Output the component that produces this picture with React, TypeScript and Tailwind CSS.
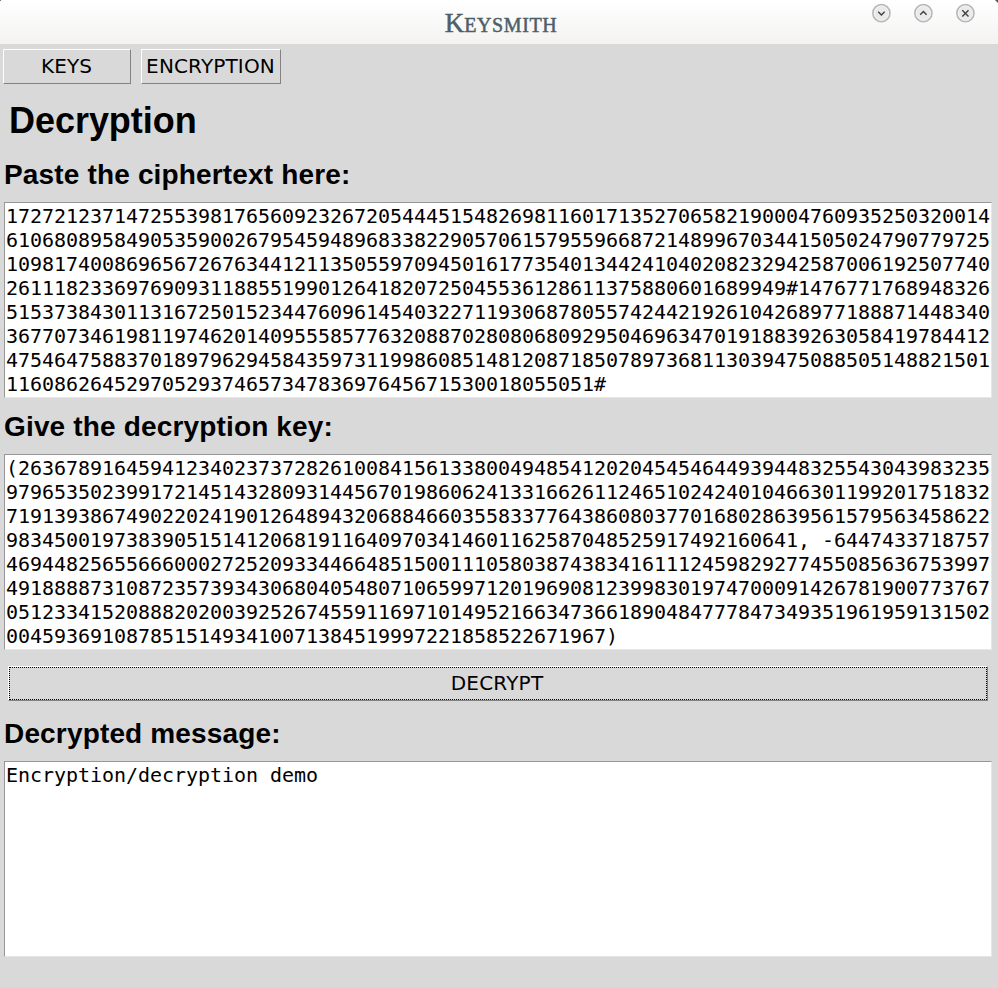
import type { ReactNode } from 'react';

const CIPHERTEXT = [
  '1727212371472553981765609232672054445154826981160171352706582190004760935250320014',
  '6106808958490535900267954594896833822905706157955966872148996703441505024790779725',
  '1098174008696567267634412113505597094501617735401344241040208232942587006192507740',
  '26111823369769093118855199012641820725045536128611375880601689949#1476771768948326',
  '5153738430113167250152344760961454032271193068780557424421926104268977188871448340',
  '3677073461981197462014095558577632088702808068092950469634701918839263058419784412',
  '4754647588370189796294584359731199860851481208718507897368113039475088505148821501',
  '1160862645297052937465734783697645671530018055051#',
];

const KEY = [
  '(263678916459412340237372826100841561338004948541202045454644939448325543043983235',
  '9796535023991721451432809314456701986062413316626112465102424010466301199201751832',
  '7191393867490220241901264894320688466035583377643860803770168028639561579563458622',
  '983450019738390515141206819116409703414601162587048525917492160641, -6447433718757',
  '4694482565566600027252093344664851500111058038743834161112459829277455085636753997',
  '4918888731087235739343068040548071065997120196908123998301974700091426781900773767',
  '0512334152088820200392526745591169710149521663473661890484777847349351961959131502',
  '00459369108785151493410071384519997221858522671967)',
];

function WindowButton({ d }: { d: string }) {
  return (
    <svg className="size-5" viewBox="0 0 20 20" fill="none">
      <circle cx="10.4" cy="10.2" r="8.5" fill="#eaeaea" stroke="#b8b8b8" strokeWidth="1.7" />
      <circle cx="10.4" cy="10.2" r="7.2" stroke="#f6f6f6" strokeWidth="0.8" />
      <path d={d} stroke="#404040" strokeWidth="1.4" />
    </svg>
  );
}

function TextArea({ lines }: { lines: string[] }) {
  return (
    <div className="ml-1 h-[196px] w-[988px] overflow-hidden whitespace-pre border border-t-[#979797] border-r-[#e6e6e6] border-b-[#e6e6e6] border-l-[#979797] bg-white p-px font-['DejaVu_Sans_Mono',monospace] text-[20px] leading-6 tracking-[-0.041px]">
      {lines.map((line) => (
        <div key={line}>{line}</div>
      ))}
    </div>
  );
}

function Button({ className, children }: { className: string; children: ReactNode }) {
  return (
    <button
      className={`flex h-[35px] items-center justify-center border border-t-white border-r-[#828282] border-b-[#828282] border-l-white font-['DejaVu_Sans',sans-serif] text-[20px] leading-6 ${className}`}
    >
      {children}
    </button>
  );
}

function Label({ children }: { children: ReactNode }) {
  return <h2 className="ml-1 pt-px text-[28px] leading-8 font-bold tracking-[0.16px]">{children}</h2>;
}

export default function App() {
  return (
    <div className="flex h-[988px] w-[998px] flex-col overflow-hidden bg-[#d9d9d9] font-['Liberation_Sans',Arial,sans-serif] text-black">
      <header className="relative grid h-11 shrink-0 grid-cols-[1fr_auto_1fr] bg-linear-to-b from-white to-[#f4f3f2]">
        <svg className="absolute top-0 right-0 h-1 w-[3px]" viewBox="0 0 3 4">
          <path d="M0 0h3v3z" fill="#555" />
        </svg>
        <span className="absolute top-0 left-0 size-px bg-[#777]" />
        <span />
        <h1 className="mt-1.5 ml-1 h-8 font-['Liberation_Serif',serif] text-[27px] leading-8 text-[#4b6069] [font-variant-caps:small-caps] [-webkit-text-stroke:0.5px_#4b6069]">
          K<span className="text-[29px] tracking-[0.6px]">eysmith</span>
        </h1>
        <div className="mt-[3px] mr-[23px] flex justify-end gap-[22px]">
          <WindowButton d="M7.2 8.8l3.2 3.2 3.2-3.2" />
          <WindowButton d="M7.2 11.8l3.2-3.2 3.2 3.2" />
          <WindowButton d="M7.3 7.3l6.2 6.2M13.5 7.3l-6.2 6.2" />
        </div>
      </header>

      <nav className="mt-[5px] ml-[3px] flex gap-2.5">
        <Button className="w-32 pr-px pb-0.5 tracking-[0.1px]">KEYS</Button>
        <Button className="w-[140px] pr-px pb-0.5 tracking-[0.15px]">ENCRYPTION</Button>
      </nav>

      <h1 className="mt-4 ml-[9px] h-[42px] text-[36px] leading-[42px] font-bold tracking-[-0.04px]">
        Decryption
      </h1>

      <main className="mt-4 flex flex-col">
        <Label>Paste the ciphertext here:</Label>
        <div className="mt-[11px]">
          <TextArea lines={CIPHERTEXT} />
        </div>
        <div className="mt-3">
          <Label>Give the decryption key:</Label>
        </div>
        <div className="mt-[11px]">
          <TextArea lines={KEY} />
        </div>
        <div className="mt-4 ml-2 flex">
          <Button className="w-[980px] p-0">
            <span className="flex h-[33px] w-[978px] items-center justify-center border border-dotted border-black pr-0.5 pb-0.5 tracking-[0.22px]">
              DECRYPT
            </span>
          </Button>
        </div>
        <div className="mt-4">
          <Label>Decrypted message:</Label>
        </div>
        <div className="mt-[11px]">
          <TextArea lines={['Encryption/decryption demo']} />
        </div>
      </main>
    </div>
  );
}
